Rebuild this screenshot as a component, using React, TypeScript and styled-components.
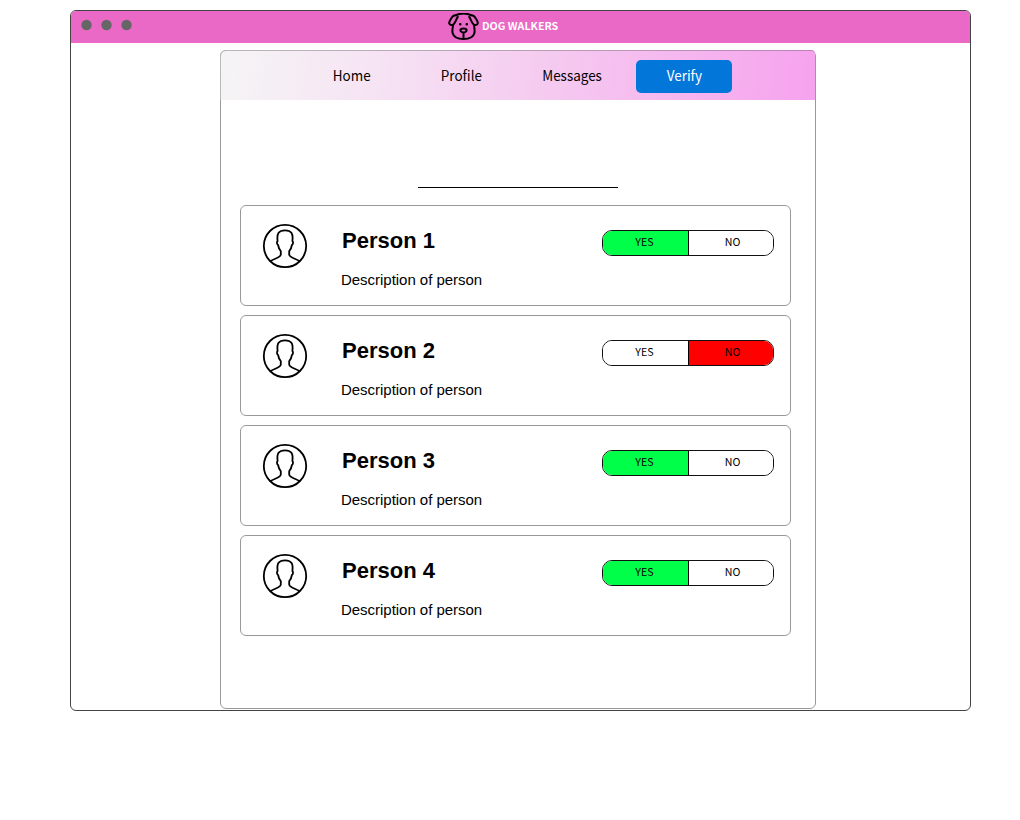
import React from 'react';
import styled, { createGlobalStyle } from 'styled-components';

const uiFont = '"Noto Sans CJK SC", "Noto Sans", sans-serif';

const GlobalStyle = createGlobalStyle`
  * { box-sizing: border-box; }
  body { margin: 0; background: #fff; color: #000; font-family: "Liberation Sans", Arial, sans-serif; }
`;

const BrowserWindow = styled.div`
  width: 901px;
  height: 701px;
  margin: 10px 0 0 70px;
  border: 1px solid #444;
  border-radius: 6px;
  overflow: hidden;
`;

const TitleBar = styled.header`
  display: grid;
  grid-template-columns: 377px auto;
  height: 32px;
  background: #ea69c6;
`;

const WindowDots = styled.svg`
  width: 70px;
  height: 32px;
  fill: #666;
`;

const Brand = styled.div`
  display: flex;
  align-items: flex-start;
  gap: 3px;
  color: #fff;
  font: 700 8pt/30px ${uiFont};
  white-space: nowrap;
`;

const DogLogo = styled.svg`
  width: 31px;
  height: 28px;
  margin-top: 2px;
  fill: none;
  stroke: #000;
  stroke-width: 2;
  stroke-linecap: round;
  stroke-linejoin: round;
`;

const Panel = styled.main`
  width: 596px;
  height: 659px;
  margin: 7px 0 0 149px;
  border: 1px solid #999;
  border-radius: 6px;
`;

const Nav = styled.nav`
  display: flex;
  height: 50px;
  margin: -1px 0 0 -1px;
  padding: 9px 0 0 75px;
  border: solid rgba(80, 70, 80, 0.35);
  border-width: 1px 0 0 1px;
  border-radius: 6px 4px 0 0;
  background: linear-gradient(97deg, #f5f5f5 0%, #f6e5f4 24%, #f5cdf0 52%, #f6a2ee 100%) border-box;
`;

const NavItem = styled.a<{ $width: number; $active?: boolean }>`
  width: ${(p) => p.$width}px;
  height: 33px;
  margin-left: ${(p) => (p.$active ? 8 : 0)}px;
  padding-left: 1px;
  border-radius: 5px;
  background: ${(p) => (p.$active ? '#0276d9' : 'transparent')};
  color: ${(p) => (p.$active ? '#fff' : '#000')};
  font: 400 14px/31px ${uiFont};
  text-align: center;
`;

const NavLabel = styled.span`
  display: inline-block;
  transform: scaleX(0.96);
`;

const Divider = styled.hr`
  width: 200px;
  height: 1px;
  margin: 87px 0 17px 197px;
  border: 0;
  background: #000;
`;

const PersonList = styled.section`
  display: grid;
  gap: 9px;
  width: 551px;
  margin-left: 19px;
`;

const Card = styled.article`
  display: grid;
  grid-template-columns: 100px 261px 172px;
  height: 101px;
  border: 1px solid #999;
  border-radius: 6px;
`;

const Avatar = styled.svg`
  width: 46px;
  height: 46px;
  margin: 17px 0 0 21px;
  fill: none;
  stroke: #000;
  stroke-width: 1.8;
  stroke-linejoin: round;
`;

const Name = styled.h2`
  margin: 22px 0 0 1px;
  font-size: 22px;
  line-height: 26px;
`;

const Description = styled.p`
  margin: 16px 0 0;
  font-size: 15px;
  line-height: 20px;
  letter-spacing: -0.03px;
`;

const Toggle = styled.div`
  display: grid;
  grid-template-columns: 85px 1fr;
  height: 26px;
  margin-top: 24px;
  border: 1px solid #111;
  border-radius: 10px;
  overflow: hidden;
`;

const Choice = styled.span<{ $fill?: string }>`
  height: 24px;
  padding-right: 2px;
  background: ${(p) => p.$fill ?? '#fff'};
  font: 400 8pt/21px ${uiFont};
  text-align: center;

  & + & {
    padding: 0 0 0 3px;
    border-left: 1px solid #000;
  }
`;

const people = [
  { name: 'Person 1', verified: true },
  { name: 'Person 2', verified: false },
  { name: 'Person 3', verified: true },
  { name: 'Person 4', verified: true },
];

export default function App() {
  return (
    <>
      <GlobalStyle />
      <BrowserWindow>
        <TitleBar>
          <WindowDots viewBox="0 0 70 32">
            <circle cx="15.5" cy="14" r="5.2" />
            <circle cx="35.5" cy="14" r="5.2" />
            <circle cx="55.5" cy="14" r="5.2" />
          </WindowDots>
          <Brand>
            <DogLogo viewBox="0 0 31 28">
              <path d="M8.2 2.2C12 0 19 0 22.8 2.2M5 12.6C4.6 15.3 4 17.8 4.6 20C5.6 24.2 9 26 15.5 26S25.4 24.2 26.4 20C27 17.8 26.4 15.3 26 12.6" />
              <path d="M8.2 2.2C5.8 1.8 4 3.8 2.8 6.1C2 7.8 .7 9.4 1.3 10.6C2 12.2 4.3 12.6 5.4 11.4C8 9 8 6 9.8 4M22.8 2.2C25.2 1.8 27 3.8 28.2 6.1C29 7.8 30.3 9.4 29.7 10.6C29 12.2 26.7 12.6 25.6 11.4C23 9 23 6 21.2 4" />
              <path d="M12.4 17C12.4 15 18.6 15 18.6 17C18.6 18.4 17 19.6 15.5 19.6S12.4 18.4 12.4 17ZM15.5 19.6V24.6" />
              <path d="M12.1 11.2H12.3M18.7 11.2H18.9" strokeWidth="2.4" />
            </DogLogo>
            DOG WALKERS
          </Brand>
        </TitleBar>
        <Panel>
          <Nav>
            <NavItem $width={110}><NavLabel>Home</NavLabel></NavItem>
            <NavItem $width={110}><NavLabel>Profile</NavLabel></NavItem>
            <NavItem $width={112}><NavLabel>Messages</NavLabel></NavItem>
            <NavItem $width={96} $active><NavLabel>Verify</NavLabel></NavItem>
          </Nav>
          <Divider />
          <PersonList>
            {people.map(({ name, verified }) => (
              <Card key={name}>
                <Avatar viewBox="0 0 46 46">
                  <circle cx="23" cy="23" r="21.2" />
                  <path d="M8.3 38.2C12 35.5 18.8 34.8 18.8 31.5V28.2C17.2 26.5 16.5 24.5 16.1 22C14.8 21.3 14.6 18.7 15.6 18C14.6 10.5 16.8 7.3 23 7.3S31.4 10.5 30.4 18C31.4 18.7 31.2 21.3 29.9 22C29.5 24.5 28.8 26.5 27.2 28.2V31.5C27.2 34.8 34 35.5 37.7 38.2" />
                </Avatar>
                <div>
                  <Name>{name}</Name>
                  <Description>Description of person</Description>
                </div>
                <Toggle>
                  <Choice $fill={verified ? '#00ff48' : undefined}>YES</Choice>
                  <Choice $fill={verified ? undefined : '#ff0000'}>NO</Choice>
                </Toggle>
              </Card>
            ))}
          </PersonList>
        </Panel>
      </BrowserWindow>
    </>
  );
}
